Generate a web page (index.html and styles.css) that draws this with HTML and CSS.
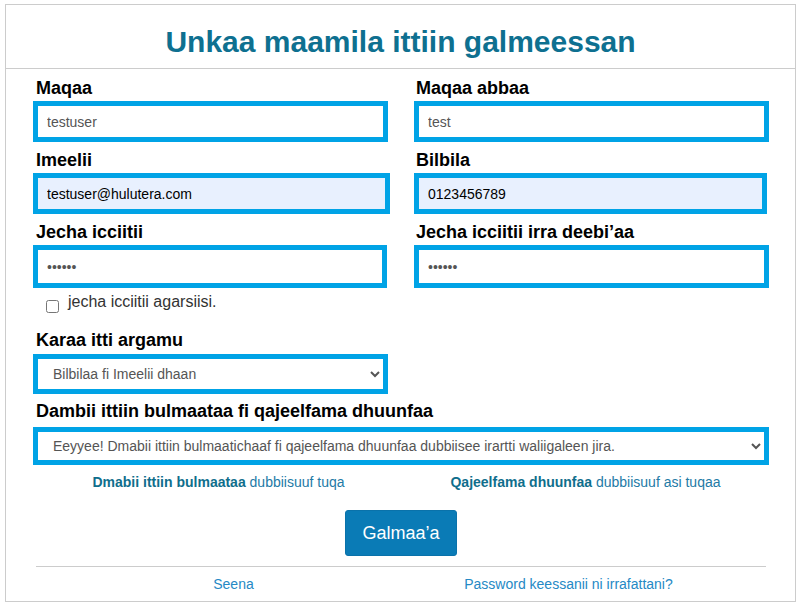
FILE: index.html
```html
<!DOCTYPE html>
<html lang="om">
<head>
<meta charset="utf-8">
<title>Galmee</title>
<link rel="stylesheet" href="styles.css">
</head>
<body>
<div class="card">
  <header class="head">
    <h1 class="title">Unkaa maamila ittiin galmeessan</h1>
  </header>
  <form class="form">
    <div class="grid">
      <div class="field">
        <label class="label">Maqaa</label>
        <input class="input" type="text" value="testuser">
      </div>
      <div class="field">
        <label class="label label-right">Maqaa abbaa</label>
        <input class="input" type="text" value="test">
      </div>
      <div class="field">
        <label class="label">Imeelii</label>
        <input class="input input-auto input-wide" type="text" value="testuser@hulutera.com">
      </div>
      <div class="field">
        <label class="label label-right">Bilbila</label>
        <input class="input input-auto input-narrow" type="text" value="0123456789">
      </div>
      <div class="field">
        <label class="label">Jecha icciitii</label>
        <input class="input input-tall input-short" type="password" value="secret">
        <div class="check">
          <input class="checkbox" type="checkbox">
          <span class="check-text">jecha icciitii agarsiisi.</span>
        </div>
      </div>
      <div class="field">
        <label class="label label-right">Jecha icciitii irra deebi’aa</label>
        <input class="input input-tall" type="password" value="secret">
      </div>
    </div>
    <div class="grid grid-select">
      <div class="field">
        <label class="label label-select">Karaa itti argamu</label>
        <select class="select">
          <option>Bilbilaa fi Imeelii dhaan</option>
        </select>
      </div>
    </div>
    <div class="field field-terms">
      <label class="label label-terms">Dambii ittiin bulmaataa fi qajeelfama dhuunfaa</label>
      <select class="select select-wide">
        <option>Eeyyee! Dmabii ittiin bulmaatichaaf fi qajeelfama dhuunfaa dubbiisee irartti waliigaleen jira.</option>
      </select>
    </div>
    <div class="links">
      <a class="link"><b class="link-strong">Dmabii ittiin bulmaataa</b> dubbiisuuf tuqa</a>
      <a class="link"><b class="link-strong">Qajeelfama dhuunfaa</b> dubbiisuuf asi tuqaa</a>
    </div>
    <div class="actions">
      <button class="btn" type="button">Galmaa’a</button>
    </div>
  </form>
  <footer class="foot">
    <a class="foot-link">Seena</a>
    <a class="foot-link">Password keessanii ni irrafattani?</a>
  </footer>
</div>
</body>
</html>
```
FILE: styles.css
```css
* { box-sizing: border-box; }
html, body { margin: 0; padding: 0; background: #fff; }
body {
  font-family: "Liberation Sans", Arial, sans-serif;
  font-size: 14px;
  line-height: 20px;
  color: #333;
}
.card {
  width: 791px;
  margin: 4px 0 0 5px;
  border: 1px solid #ccc;
  background: #fff;
}
.head {
  padding: 20px 0 9px;
  border-bottom: 1px solid #ccc;
}
.title {
  margin: 0;
  text-align: center;
  font-size: 30px;
  line-height: 34px;
  font-weight: bold;
  color: #0e7090;
}
.form {
  padding: 9px 26px 0 27px;
}
.grid {
  display: grid;
  grid-template-columns: 1fr 1fr;
  column-gap: 26px;
  row-gap: 8px;
}
.field {
  display: flex;
  flex-direction: column;
  align-items: flex-start;
}
.label {
  display: block;
  font-size: 18px;
  line-height: 20px;
  font-weight: bold;
  color: #000;
  margin-bottom: 3px;
  padding-left: 3px;
}
.label-right { padding-left: 2px; }
.input {
  width: 100%;
  height: 41px;
  border: 5px solid #00a3e6;
  padding: 0 9px;
  font-family: "Liberation Sans", Arial, sans-serif;
  font-size: 14px;
  color: #555;
  background: #fff;
  outline: none;
}
.input-auto { background: #e8f0fe; color: #000; }
.input-wide { width: calc(100% + 2px); }
.input-narrow { width: calc(100% - 2px); }
.input-tall { height: 43px; }
.input-short { width: calc(100% - 1px); }
.check {
  display: flex;
  align-items: flex-start;
  margin-top: 4px;
  height: 20px;
}
.checkbox {
  width: 13px;
  height: 13px;
  margin: 8px 9px 0 13px;
}
.check-text {
  font-size: 16px;
  line-height: 20px;
  color: #333;
}
.grid-select { margin-top: 18px; }
.label-select { margin-bottom: 4px; }
.select {
  width: 100%;
  height: 40px;
  border: 5px solid #00a3e6;
  padding: 0 0 0 11px;
  font-family: "Liberation Sans", Arial, sans-serif;
  font-size: 14px;
  color: #555;
  background: #fff;
  outline: none;
}
.field-terms { margin-top: 7px; }
.label-terms { margin-bottom: 6px; }
.select-wide { height: 38px; }
.links {
  display: grid;
  grid-template-columns: 1fr 1fr;
  margin-top: 7px;
  padding-left: 2px;
  text-align: center;
}
.link {
  color: #237aa6;
  font-size: 14px;
  line-height: 20px;
}
.link-strong { color: #0f6e8c; }
.actions {
  margin-top: 18px;
  text-align: center;
}
.btn {
  font-family: "Liberation Sans", Arial, sans-serif;
  font-size: 18px;
  line-height: 24px;
  padding: 10px 16px;
  color: #fff;
  background: #0a7bb6;
  border: 1px solid #0a72aa;
  border-radius: 3px;
}
.foot {
  margin: 10px 29px 0 30px;
  border-top: 1px solid #ccc;
  padding: 7px 30px 7px;
  display: grid;
  grid-template-columns: 1fr 1fr;
  text-align: center;
}
.foot-link {
  color: #2589c5;
  font-size: 14px;
  line-height: 20px;
}
```
